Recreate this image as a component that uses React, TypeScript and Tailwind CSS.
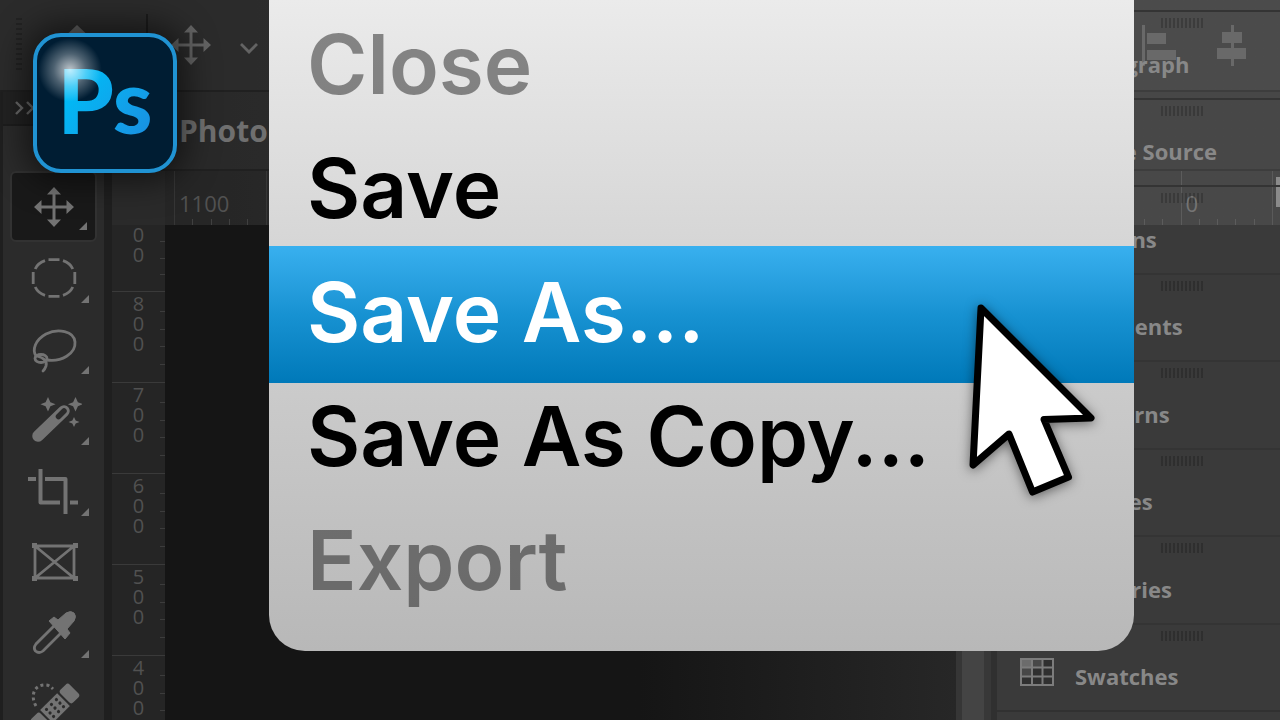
import type { ReactNode } from "react";
import clsx from "clsx";

type MenuEntry = { label: string; disabled?: boolean; active?: boolean };

const MENU: MenuEntry[] = [
  { label: "Close", disabled: true },
  { label: "Save" },
  { label: "Save As...", active: true },
  { label: "Save As Copy..." },
  { label: "Export", disabled: true },
];

const PANELS = [
  "Paragraph",
  "Clone Source",
  "Actions",
  "Gradients",
  "Patterns",
  "Shapes",
  "Libraries",
  "Swatches",
];

// Only the marks at either end of the ruler carry a number.
const RULER_MARKS = ["1100", "", "", "", "", "", "", "", "", "", "", "0"];
const SIDE_MARKS = ["800", "700", "600", "500", "400"];

function MoveGlyph() {
  return (
    <g fill="currentColor">
      <path d="M-1.500 -15h3v30h-3z M-15 -1.500h30v3h-30z" />
      <path d="M0 -20l7 7.500h-14z M0 20l7 -7.500h-14z M-20 0l7.500 -7v14z M20 0l-7.500 -7v14z" />
    </g>
  );
}

/** All tool glyphs are drawn around the origin so they sit centred in their button. */
function Glyph({ children, className = "" }: { children: ReactNode; className?: string }) {
  return (
    <svg viewBox="-28 -28 56 56" className={clsx("size-14 shrink-0", className)} aria-hidden>
      {children}
    </svg>
  );
}

const TOOLS: { name: string; flyout: boolean; glyph: ReactNode }[] = [
  { name: "Move", flyout: true, glyph: <MoveGlyph /> },
  {
    name: "Elliptical marquee",
    flyout: true,
    glyph: (
      <g fill="none" stroke="currentColor" strokeWidth="2.800">
        <path d="M-5.500 -18.400H5.500 M-5.500 18.400H5.500 M-20.800 -6V6 M20.800 -6V6" />
        <path d="M9 -17.300Q16 -15 18.800 -9 M-9 -17.300Q-16 -15 -18.800 -9 M9 17.300Q16 15 18.800 9 M-9 17.300Q-16 15 -18.800 9" />
      </g>
    ),
  },
  {
    name: "Lasso",
    flyout: true,
    glyph: (
      <g fill="none" stroke="currentColor" strokeWidth="2.800" strokeLinecap="round">
        <path d="M-18 7C-22 1 -19 -9 -8 -15C4 -21 20 -18 21 -7C22 5 7 13 -7 11" />
        <ellipse cx="-13" cy="9.500" rx="6" ry="4" />
        <path d="M-17 7Q-6 10 -8 17Q-9 20 -11 22" />
      </g>
    ),
  },
  {
    name: "Magic wand",
    flyout: true,
    glyph: (
      <g>
        <path d="M-16 16L10 -9" stroke="currentColor" strokeWidth="11.500" strokeLinecap="round" />
        <path d="M4.500 -3.500L10 -9" stroke="#2b2b2b" strokeWidth="5.500" strokeLinecap="round" />
        <g fill="currentColor">
          <path d="M-6 -23l2.400 5.200l5.200 2l-5.200 2l-2.400 5.200l-2.400 -5.200l-5.200 -2l5.200 -2z" />
          <path d="M21.500 -23l2.400 5.200l5.200 2l-5.200 2l-2.400 5.200l-2.400 -5.200l-5.200 -2l5.200 -2z" />
          <path d="M20 -3l1.700 3.500l3.800 1.500l-3.800 1.500l-1.700 3.500l-1.700 -3.500l-3.800 -1.500l3.800 -1.500z" />
        </g>
      </g>
    ),
  },
  {
    name: "Crop",
    flyout: true,
    glyph: (
      <g fill="none" stroke="currentColor" strokeWidth="4" strokeLinejoin="round">
        <path d="M-26 -12H-18 M-9 -12H11.500V23 M-13.500 -22V11.500H6 M16 11.500H24" />
      </g>
    ),
  },
  {
    name: "Frame",
    flyout: false,
    glyph: (
      <g>
        <path d="M-19 -16H20V16H-19Z M-19 -16L20 16 M20 -16L-19 16" fill="none" stroke="currentColor" strokeWidth="2.800" />
        <path d="M-22 -19h5v5h-5z M19 -19h5v5h-5z M-22 14h5v5h-5z M19 14h5v5h-5z" fill="currentColor" />
      </g>
    ),
  },
  {
    name: "Eyedropper",
    flyout: true,
    glyph: (
      <g>
        <path
          d="M2 -9L-18 11Q-21 15 -18.500 18Q-15 21 -11 18L9 -2"
          fill="none"
          stroke="currentColor"
          strokeWidth="2.800"
        />
        <path
          d="M-5 -12L0 -16L4 -13L12 -20Q17 -23 20 -20Q23 -17 20 -12L13 -4L16 0L11 6Z"
          fill="currentColor"
          stroke="currentColor"
          strokeLinejoin="round"
        />
      </g>
    ),
  },
  {
    name: "Spot healing",
    flyout: false,
    glyph: (
      <g>
        <g transform="translate(1 4) rotate(-45)" fill="currentColor">
          <rect x="-27" y="-9" width="13" height="18" rx="3" />
          <rect x="-12" y="-9" width="24" height="18" />
          <rect x="14" y="-9" width="13" height="18" rx="3" />
          <g fill="#2b2b2b">
            {[-7, 0, 7].map((x) =>
              [-5, 0, 5].map((y) => <circle key={`${x}${y}`} cx={x} cy={y} r="1.600" />),
            )}
          </g>
        </g>
        <path
          d="M-18 2C-24 -8 -20 -20 -8 -19Q-5 -19 -1 -15"
          fill="none"
          stroke="currentColor"
          strokeWidth="3"
          strokeDasharray="3 3"
        />
      </g>
    ),
  },
];

/** Dark seam between two bars, fading as the bars get lighter to the right. */
function Seam() {
  return <div className="h-[2px] shrink-0 bg-linear-to-r from-[#202020] from-20% to-[#3d3d3d] to-88%" />;
}

function OptionsBar() {
  return (
    <header className="flex h-[90px] shrink-0 items-start bg-linear-to-r from-[#2b2b2b] from-20% to-[#4b4b4b] to-88% pl-4 text-[#636363]">
      <div className="mt-[18px] h-[54px] w-[6px] bg-[repeating-linear-gradient(#222222_0_2px,transparent_2px_5px)]" />
      <svg viewBox="0 0 40 40" className="mt-6 ml-[35px] size-10" aria-hidden>
        <path d="M20 1L38 18H2Z" fill="currentColor" />
      </svg>
      <div className="mt-[14px] ml-[49px] h-14 w-[2px] bg-[#1c1c1c]" />
      <Glyph className="mt-[17px] ml-[15px]">
        <MoveGlyph />
      </Glyph>
      <svg viewBox="0 0 20 12" className="mt-[42px] ml-[20px] h-3 w-5" fill="none" aria-hidden>
        <path d="M2 2L10 10L18 2" stroke="currentColor" strokeWidth="2.800" />
      </svg>
      <div className="mt-6 mr-[33px] ml-auto flex gap-10 text-[#696969]">
        <svg viewBox="0 0 36 42" className="h-[42px] w-9" fill="currentColor" aria-hidden>
          <path d="M1 1h3v41h-3z M6 9h19v11h-19z M6 26h29v10h-29z" />
        </svg>
        <svg viewBox="0 0 30 42" className="h-[42px] w-[30px]" fill="currentColor" aria-hidden>
          <path d="M14 1h3v41h-3z M5 8h20v11h-20z M0 24h29v11h-29z" />
        </svg>
      </div>
    </header>
  );
}

function Toolbox() {
  return (
    <aside className="flex w-28 shrink-0 flex-col border-r-8 border-l-[3px] border-[#1f1f1f] bg-[#2b2b2b]">
      <div className="flex h-[34px] shrink-0 items-center border-b-2 border-[#1d1d1d] bg-[#222222] pl-3">
        <svg viewBox="0 0 20 16" className="h-4 w-5" fill="none" stroke="#696969" strokeWidth="2.400" aria-hidden>
          <path d="M1 2L7 8L1 14 M12 2L18 8L12 14" />
        </svg>
      </div>
      <nav aria-label="Tools" className="mt-[45px] flex flex-col px-[7px] text-[#737373]">
        {TOOLS.map((tool, i) => (
          <button
            key={tool.name}
            type="button"
            aria-label={tool.name}
            className={clsx(
              "relative flex h-[71px] shrink-0 items-center justify-center rounded-md",
              i === 0 && "border-2 border-[#323232] bg-[#191919]",
            )}
          >
            <Glyph>{tool.glyph}</Glyph>
            {tool.flyout && (
              <svg viewBox="0 0 8 8" className="absolute right-2 bottom-[10px] size-2" aria-hidden>
                <path d="M8 0V8H0Z" fill="currentColor" />
              </svg>
            )}
          </button>
        ))}
      </nav>
    </aside>
  );
}

function TopRuler() {
  return (
    <div className="flex h-[54px] shrink-0 bg-linear-to-r from-[#262626] from-10% to-[#484848] to-88%">
      <div className="w-[53px] shrink-0 bg-[#2a2a2a]" />
      <div className="mr-[7px] ml-[9px] grid flex-1 grid-cols-12 border-r border-[#5a5a5a]">
        {RULER_MARKS.map((mark, i) => (
          <div
            key={i}
            className={clsx(
              "flex flex-col justify-between border-l",
              i > 8 ? "border-[#5c5c5c] text-[#747474]" : "border-[#363636] text-[#515151]",
            )}
          >
            <span className="h-8 pt-4 pl-1 text-[22px] leading-8">{mark}</span>
            <div className="flex h-[6px] justify-evenly">
              {[0, 1, 2, 3].map((t) => (
                <span key={t} className={clsx("w-px", i > 8 ? "bg-[#5c5c5c]" : "bg-[#404040]")} />
              ))}
            </div>
          </div>
        ))}
      </div>
    </div>
  );
}

function SideRulerCell({ digits, className }: { digits: string; className: string }) {
  return (
    <div className={clsx("flex shrink-0 pl-[5px]", className)}>
      <div className="flex flex-1 flex-col items-center text-xl leading-5 text-[#515151]">
        {digits.split("").map((d, i) => (
          <span key={i}>{d}</span>
        ))}
      </div>
      <div className="flex w-[5px] flex-col justify-evenly">
        {[0, 1, 2, 3].slice(digits.length === 2 ? 1 : 0).map((t) => (
          <span key={t} className="h-px bg-[#3c3c3c]" />
        ))}
      </div>
    </div>
  );
}

function Workspace() {
  return (
    <main className="flex min-w-0 flex-1 flex-col">
      <div className="flex h-[77px] shrink-0 items-center bg-linear-to-r from-[#292929] from-10% to-[#474747] to-88% pl-[67px]">
        <span className="text-[30px] font-bold text-[#6f6f6f]">Photo</span>
      </div>
      <Seam />
      <TopRuler />
      <div className="flex min-h-0 flex-1">
        <div className="flex w-[53px] shrink-0 flex-col overflow-hidden bg-[#252525]">
          <SideRulerCell digits="00" className="h-[66px]" />
          {SIDE_MARKS.map((mark) => (
            <SideRulerCell key={mark} digits={mark} className="h-[91px] border-t border-[#3a3a3a] pt-[2px]" />
          ))}
        </div>
        <div className="flex-1 bg-linear-to-r from-[#151515] from-60% to-[#272727]" />
        <div className="w-[28px] shrink-0 border-l-[6px] border-[#363636] bg-[#444444]" />
        <div className="w-[13px] shrink-0 border-r-[6px] border-[#303030] bg-[#383838]" />
        <div className="w-[283px] shrink-0 bg-[#3a3a3a]" />
      </div>
    </main>
  );
}

function SwatchesIcon() {
  return (
    <svg viewBox="0 0 34 28" className="h-7 w-[34px]" aria-hidden>
      <rect width="34" height="28" fill="#303030" />
      <rect width="12" height="9" fill="#6c6c6c" />
      <path d="M12 1h10v8h-10z M1 10h10v8h-10z" fill="#484848" />
      <path
        d="M1 1H33V27H1Z M12 1V27 M22.500 1V27 M1 9.500H33 M1 18.500H33"
        fill="none"
        stroke="#7c7c7c"
        strokeWidth="2"
      />
    </svg>
  );
}

/** Collapsed panel dock; it floats see-through above the bars behind it. */
function PanelDock() {
  return (
    <div className="absolute top-[10px] right-0 grid h-[702px] w-[283px] grid-rows-8 border-b-2 border-[#313131]">
      {PANELS.map((panel) => (
        <div key={panel} className="relative flex items-center border-t-2 border-[#343434] pt-[18px] pl-[23px]">
          <div className="absolute top-[6px] left-[164px] h-[10px] w-[42px] bg-[repeating-linear-gradient(90deg,rgba(0,0,0,0.2)_0_2px,transparent_2px_4px)]" />
          <div className="w-[55px] shrink-0 pb-2">{panel === "Swatches" && <SwatchesIcon />}</div>
          <span className="text-[22px] leading-7 font-bold whitespace-nowrap text-[#888888]">{panel}</span>
        </div>
      ))}
    </div>
  );
}

function FileMenu() {
  return (
    <ul
      role="menu"
      className="absolute top-0 right-[146px] left-[269px] overflow-hidden rounded-b-[36px] bg-linear-to-b from-[#ebebeb] via-[#cfcfcf] to-[#b8b8b8] pt-[2px] pb-[29px] font-['Inter',sans-serif]"
    >
      {MENU.map((item) => (
        <li
          key={item.label}
          role="none"
          className={clsx(
            item.active &&
              "relative -mt-1 -mb-[9px] bg-linear-to-b from-[#38b0ef] via-[#1792d2] to-[#0079b9] pt-1 pb-[9px]",
          )}
        >
          <button
            type="button"
            role="menuitem"
            disabled={item.disabled}
            className={clsx(
              "block h-[124px] w-full pl-[38px] text-left text-[82px] leading-[126px] font-semibold whitespace-nowrap",
              item.active ? "text-white" : item.disabled ? "text-black/43" : "text-black",
            )}
          >
            {item.label}
          </button>
        </li>
      ))}
    </ul>
  );
}

function AppBadge() {
  return (
    <div className="absolute top-[33px] left-[33px] flex h-[140px] w-[144px] items-center justify-center rounded-[28px] border-4 border-[#2093d3] bg-[#001d33] pb-2 shadow-[0_0_32px_8px_rgba(0,0,0,0.55)]">
      <span className="bg-linear-to-br from-[#00b9f5] from-30% to-[#1b87dd] bg-clip-text font-['Lato',sans-serif] text-[90px] leading-[120px] font-black text-transparent">
        Ps
      </span>
      <div className="absolute top-0 left-0 size-[66px] bg-[radial-gradient(circle,rgba(255,255,255,0.75)_0%,rgba(255,255,255,0.3)_35%,transparent_68%)]" />
    </div>
  );
}

function Cursor() {
  return (
    <svg
      viewBox="960 290 150 220"
      className="absolute top-[290px] right-[170px] h-[220px] w-[150px] drop-shadow-[0_2px_6px_rgba(0,0,0,0.5)]"
      aria-hidden
    >
      <path
        d="M981 308L1091 418L1044 419.500L1068.500 477L1032.500 492L1009 434L973 465Z"
        fill="#fff"
        stroke="#000"
        strokeWidth="7"
        strokeLinejoin="round"
      />
    </svg>
  );
}

export default function App() {
  return (
    <div className="relative flex h-screen flex-col overflow-hidden bg-[#151515] font-['Open_Sans','Noto_Sans',sans-serif]">
      <OptionsBar />
      <Seam />
      <div className="flex min-h-0 flex-1">
        <Toolbox />
        <Workspace />
      </div>
      <div className="absolute top-[177px] right-0 h-[30px] w-1 bg-[#8a8a8a]" />
      <PanelDock />
      <FileMenu />
      <AppBadge />
      <Cursor />
    </div>
  );
}
